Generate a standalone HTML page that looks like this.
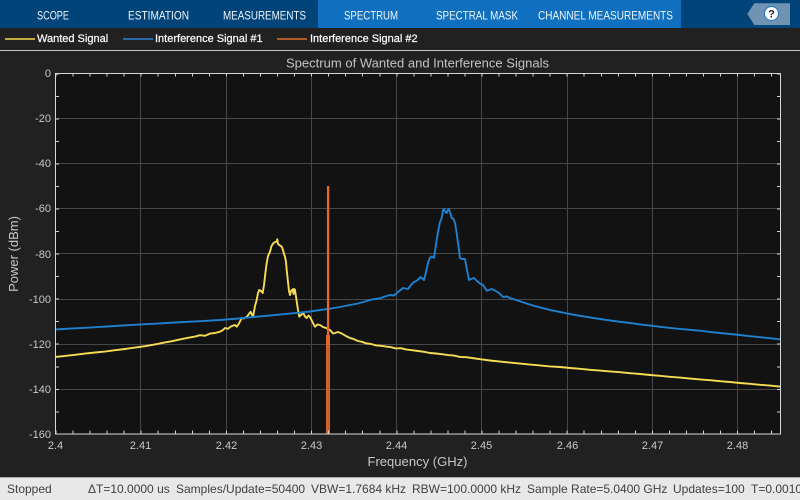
<!DOCTYPE html>
<html><head><meta charset="utf-8"><title>Spectrum</title>
<style>
html,body{margin:0;padding:0;background:#222;overflow:hidden}
svg{display:block;font-family:"Liberation Sans",sans-serif}
</style></head><body>
<svg width="800" height="500" viewBox="0 0 800 500" xmlns="http://www.w3.org/2000/svg">
<defs><clipPath id="c"><rect x="55" y="73" width="726" height="362"/></clipPath></defs>
<rect width="800" height="500" fill="#212121"/>
<!-- toolstrip -->
<rect width="800" height="28" fill="#00447a"/>
<rect x="318" width="363" height="28" fill="#1070bf"/>
<g font-size="11.5" fill="#f0f5fa">
<text x="37" y="19.5" textLength="32" lengthAdjust="spacingAndGlyphs">SCOPE</text>
<text x="128" y="19.5" textLength="61" lengthAdjust="spacingAndGlyphs">ESTIMATION</text>
<text x="223" y="19.5" textLength="83" lengthAdjust="spacingAndGlyphs">MEASUREMENTS</text>
<text x="344" y="19.5" textLength="54" lengthAdjust="spacingAndGlyphs">SPECTRUM</text>
<text x="436" y="19.5" textLength="82" lengthAdjust="spacingAndGlyphs">SPECTRAL MASK</text>
<text x="538" y="19.5" textLength="135" lengthAdjust="spacingAndGlyphs">CHANNEL MEASUREMENTS</text>
</g>
<polygon points="747.3,14 754.3,3.3 790,3.3 790,25 754.3,25" fill="#6f93b1"/>
<circle cx="771.5" cy="13.5" r="7" fill="#fff" stroke="#1b78c8" stroke-width="1"/>
<text x="771.5" y="17.5" font-size="11" font-weight="bold" fill="#222" text-anchor="middle">?</text>
<!-- legend -->
<line x1="5" x2="35" y1="39" y2="39" stroke="#f2d94e" stroke-width="1.5"/>
<line x1="123" x2="153" y1="39" y2="39" stroke="#2a82cf" stroke-width="1.5"/>
<line x1="277" x2="307" y1="39" y2="39" stroke="#e46a2c" stroke-width="1.5"/>
<g font-size="11" fill="#fff" stroke="#fff" stroke-width="0.2">
<text x="37" y="42">Wanted Signal</text>
<text x="155" y="42">Interference Signal #1</text>
<text x="310" y="42">Interference Signal #2</text>
</g>
<rect x="0" y="50" width="800" height="1" fill="#c4c4c4"/>
<!-- title -->
<text x="417.5" y="67.5" font-size="13" fill="#c4c4c4" text-anchor="middle" textLength="263" lengthAdjust="spacingAndGlyphs">Spectrum of Wanted and Interference Signals</text>
<!-- plot -->
<rect x="55.5" y="73.5" width="725" height="360.5" fill="#121212"/>
<g stroke="#474747" stroke-width="1" shape-rendering="crispEdges">
<path d="M140.5 73V434M226.5 73V434M311.5 73V434M396.5 73V434M481.5 73V434M567.5 73V434M652.5 73V434M737.5 73V434"/>
<path d="M55 118.5H781M55 163.5H781M55 208.5H781M55 253.5H781M55 299.5H781M55 344.5H781M55 389.5H781"/>
</g>
<g clip-path="url(#c)" fill="none" stroke-linejoin="round">
<path stroke="#f6dc52" stroke-width="1.9" d="M55 357 65 355.9 75 354.8 85 353.6 95 352.5 105 351.6 115 350.2 125 349 135 347.6 145 346.2 155 344.4 165 342.4 172 341.2 180 339.4 188 337.8 195 336.6 200 335.2 205 335.8 210 333.6 215 333 220 331.7 223 330 225 328 228 328.8 231 326.4 235 325 236.7 326.7 239 323.5 241.7 318 244 318.5 247 316.5 250.7 311.7 253 317 255 306 256.7 300 258 293 259.3 290 261 291 262.7 293 264 285 265.5 272 266.7 263 268 256 270 251.7 271.5 246 273.3 243.3 275 242 276.7 241.5 277.3 239.3 278 244 280 245.5 281.7 246.7 283 250 284 254 285 256.7 286 262 286.7 270 288 282 289 291 290 295 291 291 292 290 292.7 289.3 293.5 294 294.2 289 295 290 296.5 300 298 310 299.3 316.7 301 315 303.3 313 305 316.5 306.7 318 308.5 315.5 310 317 312 321 314 325 315 326.7 317.5 324.5 320 325 323 327 326 328 330 330 333 333.5 335 333 338 332 341.7 333.5 345 335.5 350 338 354 339.2 358 341 362 341.8 366 343.3 371 344 376 345.4 381 345.8 386 346.6 391 347.2 396 348.4 401 348.2 406 349.4 412 350.2 418 351 424 351.8 430 353 436 353.5 442 354.2 448 355.1 454 355.6 460 356.9 466 357.2 472 358 480 359.2 490 360.5 500 361.6 510 362.6 520 363.6 530 364.6 540 365.4 550 366.4 560 367 570 368 580 368.8 590 369.8 600 370.6 610 371.4 620 372.2 630 373.2 640 374 650 375 660 375.8 670 376.8 680 377.6 690 378.6 700 379.4 710 380.2 720 381.2 730 382 740 383 750 383.8 760 384.8 770 385.6 781 386.7"/>
<path stroke="#1f80cf" stroke-width="1.9" d="M55 329.5 70 328.6 85 327.8 100 326.9 115 326 130 325.1 145 324.2 160 323.4 175 322.5 190 321.7 205 320.9 220 320 235 318.8 250 317.3 265 316 280 314.6 299 312.7 310 311.5 320 310 330 308.7 340 307 350 305 358 303.5 365 301.5 372 299.5 380 298.3 385 296.5 390 295 394 295.5 398 292 403 288 406 288.5 408 289 411 285 413 282.7 417 280.5 420.7 277 424 280 426 272 428 263 430 257.5 432 256.5 434 258 435.5 248 437 238 438 232 440 222 441.7 218 443 210 444 209 445.5 212 446.7 213 448 209.5 449 209 450.5 214 451.7 218 453.5 219 455 223 456.5 232 458 243 459 250 460 258 462 259 465 259 467 270 469 280 471 279 474 278 477 281 480 283.5 483 285 486.7 290.7 489 290 491.7 289 495 290.5 499 293 503 297 507 296.5 510 298 516 300 522 302 528 304 534 305.8 540 307.4 546 308.9 552 310.4 558 311.6 565 313 572 314.4 580 315.8 590 317.4 600 319 610 320.4 620 321.8 630 323 640 324.4 650 325.6 660 326.8 670 327.9 680 328.9 690 329.8 700 330.7 710 331.9 720 333 730 334 740 335 750 336.2 760 337.2 770 338.2 781 339.4"/>
<path stroke="#e4682a" stroke-width="2.3" d="M328.1 186V340"/>
<rect x="326" y="335" width="4" height="99" fill="#e0652a"/>
<rect x="327.6" y="345" width="1" height="89" fill="#a85a34"/>
</g>
<!-- ticks -->
<g fill="none" stroke="#d0d0d0" shape-rendering="crispEdges">
<line x1="55.5" x2="780.5" y1="75" y2="75" stroke-width="3" stroke-dasharray="1 16.04" />
<line x1="55.5" x2="780.5" y1="432" y2="432" stroke-width="3" stroke-dasharray="1 16.04" />
<line x1="57.5" x2="57.5" y1="73.5" y2="434" stroke-width="3" stroke-dasharray="1 21.52"/>
<line x1="778.5" x2="778.5" y1="73.5" y2="434" stroke-width="3" stroke-dasharray="1 21.52"/>
<rect x="55.5" y="73.5" width="725" height="360.5" stroke="#d8d8d8" stroke-width="1"/>
</g>
<!-- y labels -->
<g font-size="11" fill="#c8c8c8" text-anchor="end">
<text x="51" y="77">0</text>
<text x="51" y="122">-20</text>
<text x="51" y="167">-40</text>
<text x="51" y="212">-60</text>
<text x="51" y="258">-80</text>
<text x="51" y="303">-100</text>
<text x="51" y="348">-120</text>
<text x="51" y="393">-140</text>
<text x="51" y="438">-160</text>
</g>
<!-- x labels -->
<g font-size="11" fill="#c8c8c8" text-anchor="middle">
<text x="55.5" y="449">2.4</text>
<text x="140.5" y="449">2.41</text>
<text x="226.5" y="449">2.42</text>
<text x="311.5" y="449">2.43</text>
<text x="396.5" y="449">2.44</text>
<text x="481.5" y="449">2.45</text>
<text x="567.5" y="449">2.46</text>
<text x="652.5" y="449">2.47</text>
<text x="737.5" y="449">2.48</text>
</g>
<text x="417.5" y="466" font-size="13" fill="#c8c8c8" text-anchor="middle" textLength="100" lengthAdjust="spacingAndGlyphs">Frequency (GHz)</text>
<text transform="translate(18,254) rotate(-90)" font-size="13" fill="#c8c8c8" text-anchor="middle">Power (dBm)</text>
<!-- status -->
<rect x="0" y="477" width="800" height="23" fill="#e8e8e8"/>
<rect x="0" y="477" width="800" height="1" fill="#a8a8a8"/>
<g font-size="12" fill="#404040">
<text x="7" y="493">Stopped</text>
<text x="88" y="493">ΔT=10.0000 us</text>
<text x="176" y="493">Samples/Update=50400</text>
<text x="311" y="493">VBW=1.7684 kHz</text>
<text x="412" y="493">RBW=100.0000 kHz</text>
<text x="527" y="493">Sample Rate=5.0400 GHz</text>
<text x="673" y="493">Updates=100</text>
<text x="751" y="493">T=0.0010</text>
</g>
</svg>
</body></html>
